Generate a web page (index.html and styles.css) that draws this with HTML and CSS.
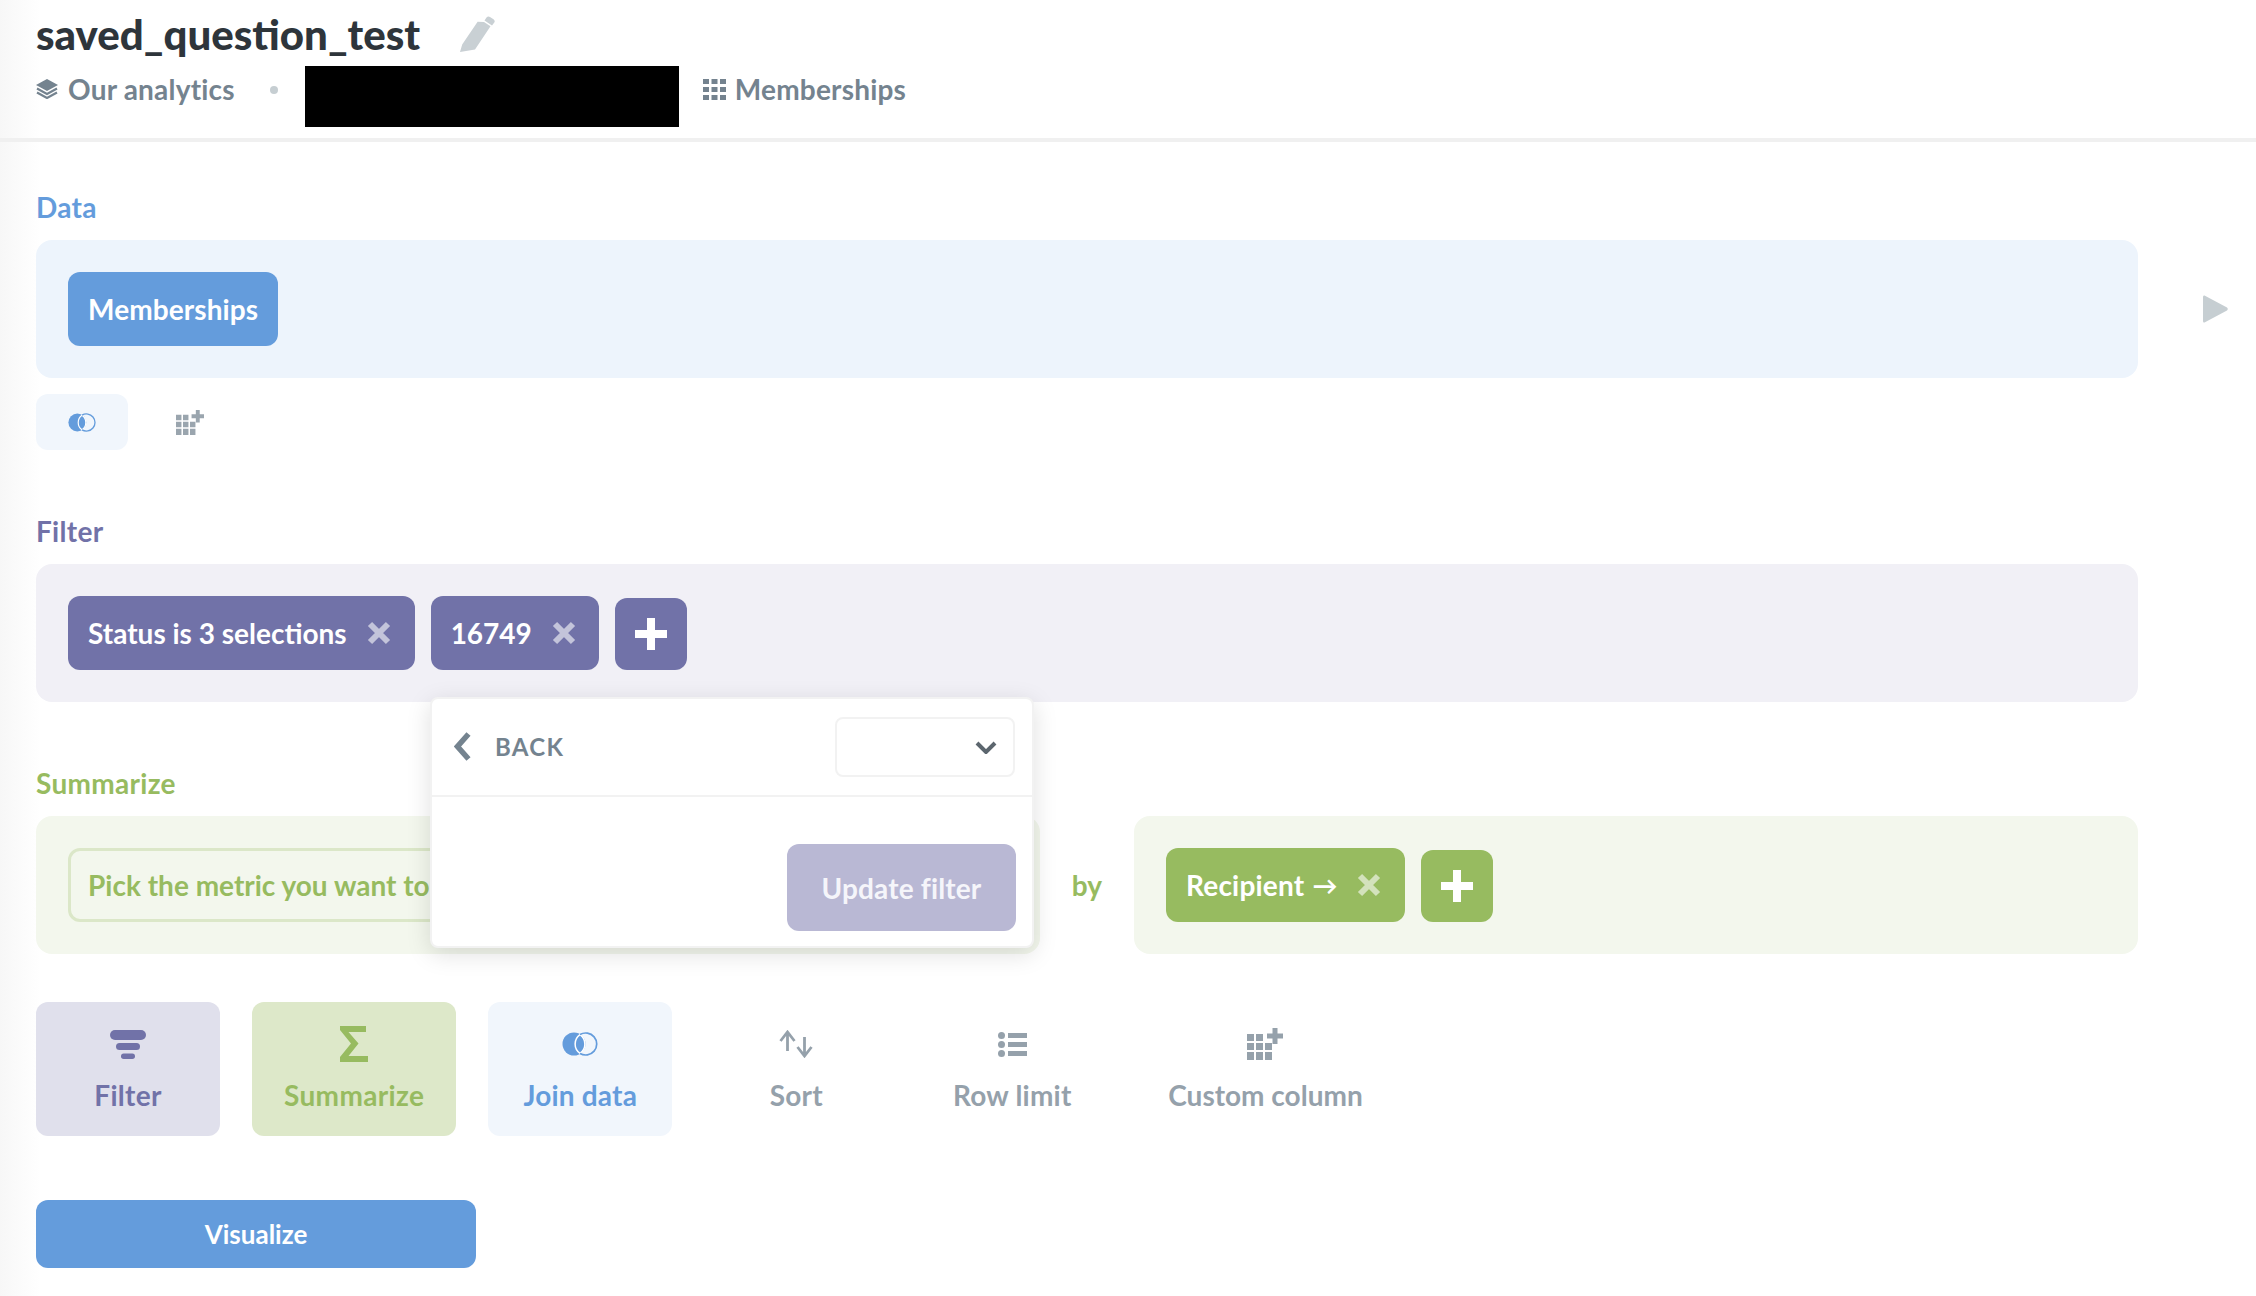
FILE: index.html
```html
<!DOCTYPE html>
<html lang="en">
<head>
<meta charset="utf-8">
<title>saved_question_test</title>
<link rel="stylesheet" href="styles.css">
</head>
<body>
<svg class="defs" width="0" height="0" aria-hidden="true">
  <defs>
    <symbol id="join" viewBox="0 0 36 24">
      <circle cx="12" cy="12" r="11.5" fill="currentColor"/>
      <path d="M18 2.600a11.500 11.500 0 0 1 0 18.800a11.500 11.500 0 0 1 0-18.800z" fill="currentColor" stroke="#fff" stroke-width="1.500"/>
      <path d="M18 2.600a11 11 0 1 1 0 18.800" fill="none" stroke="currentColor" stroke-width="1.700"/>
    </symbol>
    <symbol id="gridplus" viewBox="0 0 36 32">
      <path fill="currentColor" d="M0 6h7v7H0zM9 6h7v7H9zM0 15h7v7H0zM9 15h7v7H9zM18 15h7v7h-7zM0 24h7v8H0zM9 24h7v8H9zM18 24h7v8h-7z"/>
      <path fill="currentColor" d="M25.500 0h5v5.500H36v5h-5.500V16h-5v-5.500H20v-5h5.500z"/>
    </symbol>
    <symbol id="close" viewBox="0 0 24 24">
      <path d="M3 3l18 18M21 3L3 21" fill="none" stroke="currentColor" stroke-width="6"/>
    </symbol>
    <symbol id="plus" viewBox="0 0 32 32">
      <path d="M12 0h8v12h12v8H20v12h-8V20H0v-8h12z" fill="currentColor"/>
    </symbol>
  </defs>
</svg>

<header class="head">
  <div class="title-row">
    <h1 class="title">saved_question_test</h1>
    <svg class="pencil" viewBox="0 0 36 36" aria-hidden="true"><path d="M25 6l6.500 4.200L16 33.500 1 36l2.200-7.600L18.600 5.800zM27.500 1.500q1.500-1.800 3.500-.6l3.500 2.300q1.900 1.400.8 3.300L33 9.500l-7.500-5z" fill="currentColor"/></svg>
  </div>
  <div class="crumbs">
    <svg class="crumb-icon" viewBox="0 0 22 20" aria-hidden="true"><path d="M11 0l11 6-11 6L0 6z" fill="currentColor"/><path d="M1 9.500l10 5.500 10-5.500M1 13.500l10 5.500 10-5.500" fill="none" stroke="currentColor" stroke-width="2.200"/></svg>
    <span class="crumb-text">Our analytics</span>
    <span class="dot"></span>
    <span class="redacted"></span>
    <svg class="table-icon" viewBox="0 0 23 21" aria-hidden="true"><path fill="currentColor" d="M0 0h6v5H0zM8.500 0h6v5h-6zM17 0h6v5h-6zM0 8h6v5H0zM8.500 8h6v5h-6zM17 8h6v5h-6zM0 16h6v5H0zM8.500 16h6v5h-6zM17 16h6v5h-6z"/></svg>
    <span class="crumb-text">Memberships</span>
  </div>
</header>

<main class="main">
  <section class="step">
    <h2 class="label blue">Data</h2>
    <div class="with-run">
      <div class="panel panel-blue">
        <span class="chip bg-blue chip-plain">Memberships</span>
      </div>
      <svg class="run" viewBox="0 0 25 28" aria-hidden="true"><path d="M1.500 0.500L24 12.500q1.500 1.500 0 3L1.500 27.500Q0 28 0 26V2Q0 0 1.500 .5z" fill="currentColor"/></svg>
    </div>
    <div class="mini-row">
      <span class="mini mini-on"><svg class="mini-join" aria-hidden="true"><use href="#join"/></svg></span>
      <span class="mini mini-off"><svg class="mini-grid" aria-hidden="true"><use href="#gridplus"/></svg></span>
    </div>
  </section>

  <section class="step">
    <h2 class="label purple">Filter</h2>
    <div class="panel panel-purple filter-panel">
      <span class="chip bg-purple">Status is 3 selections<svg class="x" aria-hidden="true"><use href="#close"/></svg></span>
      <span class="chip chip-num bg-purple">16749<svg class="x" aria-hidden="true"><use href="#close"/></svg></span>
      <span class="add bg-purple"><svg class="plus" aria-hidden="true"><use href="#plus"/></svg></span>
      <div class="popover">
        <div class="pop-head">
          <svg class="back-icon" viewBox="0 0 17 29" aria-hidden="true"><path d="M14.500 2L3.500 14.500 14.500 27" fill="none" stroke="currentColor" stroke-width="5.500"/></svg>
          <span class="back">BACK</span>
          <span class="select"><svg class="caret" viewBox="0 0 22 13" aria-hidden="true"><path d="M2 2l9 9 9-9" fill="none" stroke="currentColor" stroke-width="4"/></svg></span>
        </div>
        <div class="pop-foot">
          <span class="update">Update filter</span>
        </div>
      </div>
    </div>
  </section>

  <section class="step">
    <h2 class="label green">Summarize</h2>
    <div class="sum-row">
      <div class="panel panel-green sum-left">
        <span class="metric">Pick the metric you want to view</span>
      </div>
      <span class="by">by</span>
      <div class="panel panel-green sum-right">
        <span class="chip chip-recipient bg-green">Recipient<span class="arrow">→</span><svg class="x" aria-hidden="true"><use href="#close"/></svg></span>
        <span class="add bg-green"><svg class="plus" aria-hidden="true"><use href="#plus"/></svg></span>
      </div>
    </div>
  </section>

  <nav class="actions">
    <div class="action act-filter">
      <span class="act-icon"><svg class="i-filter" viewBox="0 0 36 29" aria-hidden="true"><rect width="36" height="10" rx="5" fill="currentColor"/><rect x="6" y="13" width="24" height="7" rx="3.500" fill="currentColor"/><rect x="11" y="23.500" width="14" height="5.500" rx="2.700" fill="currentColor"/></svg></span>
      <span>Filter</span>
    </div>
    <div class="action act-sum">
      <span class="act-icon"><svg class="i-sigma" viewBox="0 0 28 36" aria-hidden="true"><path d="M0 0h26v6H8.500l10 11.500L8.500 30H28v6H0v-5l11-13.500L0 4z" fill="currentColor"/></svg></span>
      <span>Summarize</span>
    </div>
    <div class="action act-join">
      <span class="act-icon"><svg class="i-join" aria-hidden="true"><use href="#join"/></svg></span>
      <span>Join data</span>
    </div>
    <div class="action act-plain">
      <span class="act-icon"><svg class="i-sort" viewBox="0 0 34 28" aria-hidden="true"><path d="M1.500 11L8.500 2l7 9M8.500 2v19M18.500 17l7 9 7-9M25.500 7v19" fill="none" stroke="currentColor" stroke-width="2.800"/></svg></span>
      <span>Sort</span>
    </div>
    <div class="action act-plain">
      <span class="act-icon"><svg class="i-list" viewBox="0 0 29 25" aria-hidden="true"><circle cx="3.500" cy="3.500" r="3.500" fill="currentColor"/><circle cx="3.500" cy="12.500" r="3.500" fill="currentColor"/><circle cx="3.500" cy="21.500" r="3.500" fill="currentColor"/><path fill="currentColor" d="M10 1h19v5H10zM10 10h19v5H10zM10 19h19v5H10z"/></svg></span>
      <span>Row limit</span>
    </div>
    <div class="action act-plain act-wide">
      <span class="act-icon"><svg class="i-grid" aria-hidden="true"><use href="#gridplus"/></svg></span>
      <span>Custom column</span>
    </div>
  </nav>

  <button class="visualize" type="button">Visualize</button>
</main>
</body>
</html>
```
FILE: styles.css
```css
* { box-sizing: border-box; }
html, body { margin: 0; padding: 0; }
body {
  height: 1296px;
  overflow: hidden;
  font-family: Lato, "Liberation Sans", sans-serif;
  font-weight: 700;
  font-size: 28px;
  background: linear-gradient(90deg, #f7f7f7 0, #fdfdfd 30px, #fff 40px);
  color: #2e353b;
}
.defs { position: absolute; }

.head {
  padding: 12px 36px 11px;
  height: 142px;
  border-bottom: 4px solid #f0f0f0;
}
.title-row { display: flex; align-items: center; height: 46px; margin-bottom: 8px; }
.title { margin: -2px 0 0; font-size: 42px; line-height: 46px; font-weight: 900; color: #2e353b; }
.pencil { width: 36px; height: 36px; margin-left: 39px; margin-top: -3px; color: #c9d0d4; }
.crumbs { display: flex; align-items: center; height: 61px; color: #74838f; }
.crumb-icon { width: 22px; height: 20px; margin-right: 10px; margin-bottom: 15px; }
.table-icon { width: 23px; height: 21px; margin-left: 24px; margin-right: 9px; margin-bottom: 15px; }
.crumb-text { line-height: 34px; white-space: nowrap; margin-bottom: 15px; letter-spacing: .2px; }
.dot { width: 8px; height: 8px; border-radius: 50%; background: #c6ced2; margin: 0 27px 13px 35px; }
.redacted { width: 374px; height: 61px; background: #000; }

.main { padding: 48px 0 0 36px; }
.step + .step { margin-top: 64px; }
.label { margin: 0 0 16px; font-size: 28px; line-height: 34px; font-weight: 700; letter-spacing: .3px; }
.blue { color: #649cdc; }
.purple { color: #7172a8; }
.green { color: #97bb60; }

.with-run { display: flex; align-items: center; width: 2192px; }
.run { width: 25px; height: 28px; margin-left: 65px; color: #c6ced2; }
.panel {
  display: flex;
  align-items: flex-end;
  gap: 16px;
  height: 138px;
  padding: 32px;
  border-radius: 16px;
  width: 2102px;
  flex: none;
}
.panel-blue { background: #edf4fc; }
.panel-purple { background: #f1f0f6; }
.panel-green { background: #f3f7ed; }
.bg-blue { background: #649cdc; }
.bg-purple { background: #7172a8; }
.bg-green { background: #97bb60; }

.chip {
  display: inline-flex;
  align-items: center;
  height: 74px;
  padding: 0 24px 0 20px;
  border-radius: 12px;
  color: #fff;
  white-space: nowrap;
}
.chip-plain { padding: 0 20px; letter-spacing: .1px; }
.chip-num { padding-right: 23px; }
.chip-recipient { letter-spacing: .2px; }
.arrow { font-size: 25px; margin-left: 8px; letter-spacing: 0; }
.x { width: 24px; height: 24px; margin-left: 20px; color: rgba(255, 255, 255, .58); flex: none; }
.add {
  display: inline-flex;
  align-items: center;
  justify-content: center;
  width: 72px;
  height: 72px;
  border-radius: 12px;
  color: #fff;
}
.plus { width: 32px; height: 32px; }

.mini-row { display: flex; margin-top: 16px; gap: 16px; }
.mini { display: flex; align-items: center; justify-content: center; width: 92px; height: 56px; border-radius: 12px; }
.mini-on { background: #f1f6fc; color: #649cdc; }
.mini-off { color: #9aa5ae; }
.mini-join { width: 28px; height: 19px; }
.mini-grid { width: 28px; height: 25px; }

.filter-panel { position: relative; }
.popover {
  position: absolute;
  left: 394px;
  top: 133px;
  width: 604px;
  height: 251px;
  background: #fff;
  border: 2px solid #f2f2f2;
  border-radius: 8px;
  box-shadow: 0 6px 24px rgba(0, 0, 0, .13);
  z-index: 2;
}
.pop-head {
  display: flex;
  align-items: flex-start;
  height: 98px;
  padding: 18px 17px 0 22px;
  border-bottom: 2px solid #f2f2f2;
}
.back-icon { width: 17px; height: 29px; margin-top: 15px; color: #74838f; }
.back { margin-left: 24px; font-size: 24px; line-height: 60px; letter-spacing: 1.300px; color: #74838f; }
.select {
  display: flex;
  align-items: center;
  justify-content: flex-end;
  width: 180px;
  height: 60px;
  margin-left: auto;
  padding-right: 16px;
  border: 2px solid #f2f2f2;
  border-radius: 8px;
  color: #5c666e;
}
.caret { width: 22px; height: 13px; }
.pop-foot { display: flex; justify-content: flex-end; padding: 47px 16px 0 0; }
.update {
  display: flex;
  align-items: center;
  justify-content: center;
  width: 229px;
  height: 87px;
  border-radius: 12px;
  background: #b9b8d4;
  color: #f5f5fa;
  letter-spacing: .15px;
}

.sum-row { display: flex; align-items: center; }
.sum-left { width: 1004px; overflow: hidden; }
.metric {
  display: flex;
  align-items: center;
  height: 74px;
  padding: 0 17px;
  border: 3px solid #dbe7c8;
  border-radius: 12px;
  color: #97bb60;
  white-space: nowrap;
}
.by { width: 94px; text-align: center; color: #97bb60; }
.sum-right { width: 1004px; }

.actions { display: flex; gap: 32px; margin-top: 48px; }
.action {
  display: flex;
  flex-direction: column;
  align-items: center;
  min-width: 184px;
  height: 134px;
  padding: 24px 32px 0;
  border-radius: 12px;
  line-height: 34px;
  white-space: nowrap;
}
.act-icon { display: flex; align-items: center; justify-content: center; height: 36px; margin-bottom: 16px; }
.act-filter { background: #e0e0ec; color: #7172a8; letter-spacing: .3px; }
.act-sum { background: #dde8c9; color: #97bb60; letter-spacing: .35px; }
.act-join { background: #f1f6fc; color: #649cdc; letter-spacing: .2px; }
.act-plain { color: #95a1ab; letter-spacing: .2px; }
.act-wide { letter-spacing: 0; }
.i-filter { width: 36px; height: 29px; }
.i-sigma { width: 28px; height: 36px; }
.i-join { width: 36px; height: 24px; }
.i-sort { width: 34px; height: 28px; }
.i-list { width: 29px; height: 25px; }
.i-grid { width: 36px; height: 32px; }

.visualize {
  display: block;
  width: 440px;
  height: 68px;
  margin-top: 64px;
  border: 0;
  padding: 0;
  border-radius: 12px;
  background: #649cdc;
  color: #fff;
  font: inherit;
  font-size: 26px;
}
```
